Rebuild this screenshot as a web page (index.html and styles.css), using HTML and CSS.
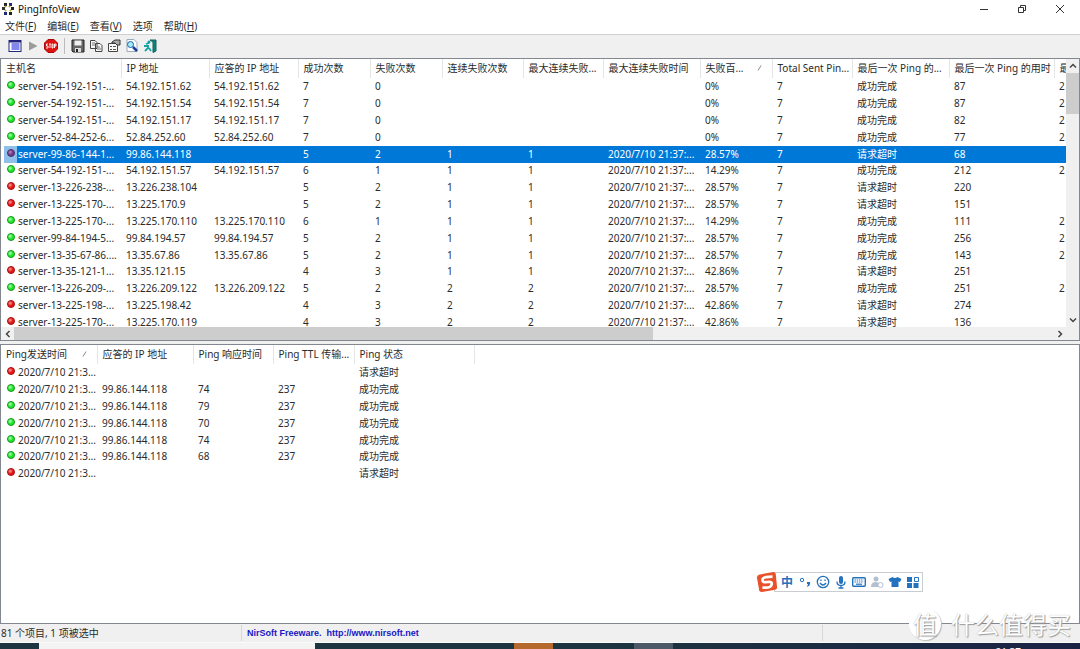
FILE: index.html
```html
<!DOCTYPE html>
<html lang="zh-CN">
<head>
<meta charset="utf-8">
<title>PingInfoView</title>
<link rel="stylesheet" href="styles.css">
</head>
<body>
<header class="titlebar">
  <svg class="app-icon" viewBox="0 0 12 12" aria-hidden="true"><rect x="2" y="0" width="3" height="3" fill="#222"/><rect x="7" y="0" width="3" height="3" fill="#1d2c7a"/><rect x="0" y="4" width="3" height="3" fill="#333"/><rect x="9" y="4" width="3" height="3" fill="#222"/><rect x="2" y="9" width="3" height="3" fill="#1d2c7a"/><rect x="7" y="9" width="3" height="3" fill="#222"/><path d="M3 3l1 1M8 3l-1 1M3 8l1-1M9 8L8 7" stroke="#b6a31c" stroke-width="2"/></svg>
  <h1>PingInfoView</h1>
  <div class="window-buttons">
    <button aria-label="最小化"><svg viewBox="0 0 10 10"><path d="M1 5.500h8" /></svg></button>
    <button aria-label="还原"><svg viewBox="0 0 10 10"><path d="M1.500 3.500h5v5h-5zM3.500 3.500v-2h5v5h-2"/></svg></button>
    <button aria-label="关闭"><svg viewBox="0 0 10 10"><path d="M1 1l8 8M9 1L1 9"/></svg></button>
  </div>
</header>
<nav class="menubar">
  <button>文件(<u>F</u>)</button><button>编辑(<u>E</u>)</button><button>查看(<u>V</u>)</button><button>选项</button><button>帮助(<u>H</u>)</button>
</nav>
<div class="toolbar">
  <button aria-label="显示下方窗格"><svg viewBox="0 0 14 14"><rect x="1" y="1.500" width="12" height="11" fill="#fff" stroke="#24247c"/><path d="M1 2.500h12" stroke="#24247c" stroke-width="2"/><rect x="3.500" y="4" width="8" height="7" fill="#8287ee"/></svg></button>
  <button aria-label="开始"><svg viewBox="0 0 14 14"><path d="M3 2.500v9l8.500-4.500z" fill="#9b9b9b"/></svg></button>
  <button aria-label="停止"><svg viewBox="0 0 14 14"><path d="M4 .5h6L13.500 4v6L10 13.500H4L.5 10V4z" fill="#df1212" stroke="#ad0909"/><path d="M4 5H2.500v2h1.500v2H2M5 5h2M6 5v4M8 5h1v4H8zM10.500 9V5H12v2h-1.500" fill="none" stroke="#fff" stroke-width=".9"/></svg></button>
  <span class="divider"></span>
  <button aria-label="保存"><svg viewBox="0 0 14 14"><path d="M1 1h12v12H2l-1-1z" fill="#666" stroke="#222"/><path d="M3.500 1.500h7v5h-7z" fill="#eee"/><path d="M4 9h6v4H4z" fill="#ddd"/><path d="M5 10h2v3H5z" fill="#222"/></svg></button>
  <button aria-label="复制"><svg viewBox="0 0 14 14"><g fill="#f5f5f5" stroke="#444"><path d="M1.500 1.500H6L8 3.500v6H1.500zM6.500 4.500H11l2 2v6H6.500z"/><path d="M3 4h3M3 6h3M8 8h3M8 10h4" stroke="#777"/></g></svg></button>
  <button aria-label="属性"><svg viewBox="0 0 14 14"><path d="M1.500 4.500h9v8h-9z" fill="#f8f8f8" stroke="#444"/><path d="M3 7.500h2M6 7.500h3M3 10.500h2M6 10.500h3" stroke="#555"/><path d="M5 3l3-2h5v5h-3L8 4H5z" fill="#aaa" stroke="#333"/></svg></button>
  <button aria-label="查找"><svg viewBox="0 0 14 14"><path d="M2 .5h7l3 3v9H2z" fill="#fff" stroke="#9ab"/><circle cx="5.500" cy="5.500" r="3" fill="#a7ebf5" stroke="#1764b0"/><path d="M8 8l4 4" stroke="#1b3f9c" stroke-width="2.500"/></svg></button>
  <button aria-label="退出"><svg viewBox="0 0 14 14"><path d="M7 1h6v11l-3 1.500V3L7 1z" fill="#12827f" stroke="#15615f"/><path d="M1 7h5M6 4L3 5M5 6v3l-3 3M6 9l2 3" stroke="#13a5a5" stroke-width="1.800" fill="none"/><circle cx="6" cy="3" r="1.500" fill="#139c9c"/></svg></button>
</div>
<main class="panes">
  <section class="pane hosts" aria-label="主机列表">
    <div class="list">
      <table>
        <colgroup><col class="w120"><col class="w88"><col class="w89"><col class="w72"><col class="w72"><col class="w81"><col class="w80"><col class="w97"><col class="w72"><col class="w80"><col class="w97"><col class="w105"><col></colgroup>
        <thead><tr><th>主机名</th><th>IP 地址</th><th>应答的 IP 地址</th><th>成功次数</th><th>失败次数</th><th>连续失败次数</th><th>最大连续失败...</th><th>最大连续失败时间</th><th><span class="sorted">失败百...<svg viewBox="0 0 5 6" aria-hidden="true"><path d="M1 5.500L4 .5"/></svg></span></th><th>Total Sent Pin...</th><th>最后一次 Ping 的...</th><th>最后一次 Ping 的用时</th><th>最</th></tr></thead>
        <tbody>
          <tr><td><i class="dot up"></i>server-54-192-151-...<td>54.192.151.62<td>54.192.151.62<td>7<td>0<td><td><td><td>0%<td>7<td>成功完成<td>87<td>2</tr>
          <tr><td><i class="dot up"></i>server-54-192-151-...<td>54.192.151.54<td>54.192.151.54<td>7<td>0<td><td><td><td>0%<td>7<td>成功完成<td>87<td>2</tr>
          <tr><td><i class="dot up"></i>server-54-192-151-...<td>54.192.151.17<td>54.192.151.17<td>7<td>0<td><td><td><td>0%<td>7<td>成功完成<td>82<td>2</tr>
          <tr><td><i class="dot up"></i>server-52-84-252-6...<td>52.84.252.60<td>52.84.252.60<td>7<td>0<td><td><td><td>0%<td>7<td>成功完成<td>77<td>2</tr>
          <tr class="selected"><td><i class="dot"></i>server-99-86-144-1...<td>99.86.144.118<td><td>5<td>2<td>1<td>1<td>2020/7/10 21:37:...<td>28.57%<td>7<td>请求超时<td>68<td></tr>
          <tr><td><i class="dot up"></i>server-54-192-151-...<td>54.192.151.57<td>54.192.151.57<td>6<td>1<td>1<td>1<td>2020/7/10 21:37:...<td>14.29%<td>7<td>成功完成<td>212<td>2</tr>
          <tr><td><i class="dot"></i>server-13-226-238-...<td>13.226.238.104<td><td>5<td>2<td>1<td>1<td>2020/7/10 21:37:...<td>28.57%<td>7<td>请求超时<td>220<td></tr>
          <tr><td><i class="dot"></i>server-13-225-170-...<td>13.225.170.9<td><td>5<td>2<td>1<td>1<td>2020/7/10 21:37:...<td>28.57%<td>7<td>请求超时<td>151<td></tr>
          <tr><td><i class="dot up"></i>server-13-225-170-...<td>13.225.170.110<td>13.225.170.110<td>6<td>1<td>1<td>1<td>2020/7/10 21:37:...<td>14.29%<td>7<td>成功完成<td>111<td>2</tr>
          <tr><td><i class="dot up"></i>server-99-84-194-5...<td>99.84.194.57<td>99.84.194.57<td>5<td>2<td>1<td>1<td>2020/7/10 21:37:...<td>28.57%<td>7<td>成功完成<td>256<td>2</tr>
          <tr><td><i class="dot up"></i>server-13-35-67-86....<td>13.35.67.86<td>13.35.67.86<td>5<td>2<td>1<td>1<td>2020/7/10 21:37:...<td>28.57%<td>7<td>成功完成<td>143<td>2</tr>
          <tr><td><i class="dot"></i>server-13-35-121-1...<td>13.35.121.15<td><td>4<td>3<td>1<td>1<td>2020/7/10 21:37:...<td>42.86%<td>7<td>请求超时<td>251<td></tr>
          <tr><td><i class="dot up"></i>server-13-226-209-...<td>13.226.209.122<td>13.226.209.122<td>5<td>2<td>2<td>2<td>2020/7/10 21:37:...<td>28.57%<td>7<td>成功完成<td>251<td>2</tr>
          <tr><td><i class="dot"></i>server-13-225-198-...<td>13.225.198.42<td><td>4<td>3<td>2<td>2<td>2020/7/10 21:37:...<td>42.86%<td>7<td>请求超时<td>274<td></tr>
          <tr><td><i class="dot"></i>server-13-225-170-...<td>13.225.170.119<td><td>4<td>3<td>2<td>2<td>2020/7/10 21:37:...<td>42.86%<td>7<td>请求超时<td>136<td></tr>
        </tbody>
      </table>
    </div>
    <div class="vscroll">
      <button aria-label="向上滚动"><svg viewBox="0 0 8 8"><path d="M1 5.500l3-3 3 3"/></svg></button>
      <div class="track"><div class="thumb"></div></div>
      <button aria-label="向下滚动"><svg viewBox="0 0 8 8"><path d="M1 2.500l3 3 3-3"/></svg></button>
    </div>
    <div class="hscroll">
      <button aria-label="向左滚动"><svg viewBox="0 0 8 8"><path d="M5.500 1l-3 3 3 3"/></svg></button>
      <div class="track"><div class="thumb"></div></div>
      <button aria-label="向右滚动"><svg viewBox="0 0 8 8"><path d="M2.500 1l3 3-3 3"/></svg></button>
    </div>
    <div class="corner"></div>
  </section>
  <section class="pane pings" aria-label="Ping 记录">
    <table>
      <colgroup><col class="w96"><col class="w96"><col class="w80"><col class="w81"><col class="w120"><col></colgroup>
      <thead><tr><th><span class="sorted">Ping发送时间<svg viewBox="0 0 5 6" aria-hidden="true"><path d="M1 5.500L4 .5"/></svg></span></th><th>应答的 IP 地址</th><th>Ping 响应时间</th><th>Ping TTL 传输...</th><th>Ping 状态</th><th></th></tr></thead>
      <tbody>
        <tr><td><i class="dot"></i>2020/7/10 21:3...<td><td><td><td>请求超时<td></tr>
        <tr><td><i class="dot up"></i>2020/7/10 21:3...<td>99.86.144.118<td>74<td>237<td>成功完成<td></tr>
        <tr><td><i class="dot up"></i>2020/7/10 21:3...<td>99.86.144.118<td>79<td>237<td>成功完成<td></tr>
        <tr><td><i class="dot up"></i>2020/7/10 21:3...<td>99.86.144.118<td>70<td>237<td>成功完成<td></tr>
        <tr><td><i class="dot up"></i>2020/7/10 21:3...<td>99.86.144.118<td>74<td>237<td>成功完成<td></tr>
        <tr><td><i class="dot up"></i>2020/7/10 21:3...<td>99.86.144.118<td>68<td>237<td>成功完成<td></tr>
        <tr><td><i class="dot"></i>2020/7/10 21:3...<td><td><td><td>请求超时<td></tr>
      </tbody>
    </table>
  </section>
</main>
<footer class="statusbar">
  <span class="count">81 个项目, 1 项被选中</span>
  <a href="http://www.nirsoft.net">NirSoft Freeware.&nbsp; http://www.nirsoft.net</a>
  <span></span>
</footer>
<div class="taskbar">
  <span class="search"></span><span class="app orange"></span><span class="app gray"></span><time>21:37</time>
</div>

<div class="ime">
  <svg class="sogou" viewBox="0 0 24 24" aria-hidden="true"><path d="M3 4l16-3q2 0 2.500 2L23 18q0 2-2 2.500L6 23q-2 0-2.500-2L1 7q0-2 2-3z" fill="#e8512a"/><path d="M18 6Q7 6 7 9.500T12.500 12 17 15 7 18" fill="none" stroke="#fff" stroke-width="3"/></svg>
  <div class="ime-bar">
    <button>中</button>
    <button aria-label="标点"><svg viewBox="0 0 14 14"><circle cx="4" cy="5" r="1.700" fill="none" stroke="#2472bd"/><path d="M9 7h3v2q0 2-3 3l1-3H9z" fill="#2472bd"/></svg></button>
    <button aria-label="表情"><svg viewBox="0 0 14 14" fill="none" stroke="#2472bd" stroke-width="1.300"><circle cx="7" cy="7" r="5.700"/><path d="M4 8q3 4 6 0M5 4.500v1.500M9 4.500v1.500"/></svg></button>
    <button aria-label="语音"><svg viewBox="0 0 14 14"><rect x="5" y="1" width="4" height="8" rx="2" fill="#2472bd"/><path d="M3 6.500q0 4 4 4t4-4M7 10v3M4.500 13h5" fill="none" stroke="#2472bd" stroke-width="1.300"/></svg></button>
    <button aria-label="键盘"><svg viewBox="0 0 14 14"><rect x=".7" y="2.700" width="12.600" height="8.600" rx="1" fill="#fff" stroke="#2472bd" stroke-width="1.400"/><path d="M2.500 5h9M2.500 7h9" stroke="#2472bd" stroke-width="1.200" stroke-dasharray="1.400 .8"/><path d="M4 9.200h6" stroke="#2472bd" stroke-width="1.200"/></svg></button>
    <button aria-label="用户"><svg viewBox="0 0 14 14"><circle cx="6" cy="4" r="2.500" fill="#b4c0d2"/><path d="M1 12q0-5 5-5 3 0 3 2v3z" fill="#b4c0d2"/><circle cx="10.500" cy="10" r="2.500" fill="#fff" stroke="#b4c0d2"/></svg></button>
    <button aria-label="皮肤"><svg viewBox="0 0 14 14"><path d="M4.500 2q2.500 2 5 0L13.500 4 12 7l-1.500-.5V12h-7V6.500L2 7 .5 4z" fill="#2472bd"/></svg></button>
    <button aria-label="工具箱"><svg viewBox="0 0 14 14"><path d="M1 2h5v5H1zM1 8h5v5H1zM7.500 8h5v5h-5z" fill="#2472bd"/><path d="M8.500 2.500h4v4h-4z" fill="none" stroke="#2472bd"/></svg></button>
  </div>
</div>
<div class="watermark"><span class="seal">值</span><span>什么值得买</span></div>
</body>
</html>
```
FILE: styles.css
```css
*, *::before { box-sizing: border-box; }
body {
  margin: 0;
  height: 100vh;
  display: flex;
  flex-direction: column;
  overflow: hidden;
  position: relative;
  background: #f0f0f0;
  color: #2b2b2b;
  font: 10px/16px "Noto Sans", "Noto Sans CJK SC", sans-serif;
}
button {
  margin: 0;
  padding: 0;
  border: 0;
  background: none;
  color: inherit;
  font: inherit;
}
svg { display: block; }

.titlebar { display: flex; align-items: center; height: 18px; padding-left: 2px; background: #fff; }
.app-icon { width: 12px; height: 12px; }
.titlebar h1 { flex: 1; margin: 0 0 0 4px; font-size: 10px; font-weight: 400; color: #111; }
.window-buttons { display: flex; gap: 28px; padding-right: 15px; }
.window-buttons svg { width: 10px; height: 10px; fill: none; stroke: #333; }
.menubar { display: flex; gap: 11px; height: 16px; padding-left: 5px; background: #fff; }

.toolbar {
  display: flex;
  align-items: center;
  gap: 4px;
  height: 24px;
  padding: 0 8px 2px;
  border-top: 1px solid #d0d0d0;
}
.toolbar svg { width: 14px; height: 14px; }
.toolbar .divider { width: 1px; height: 16px; margin: 0 2px; background: #bbb; }

.panes { flex: 1; min-height: 0; display: grid; grid-template-rows: 283fr 280fr; gap: 3px; }
.pane { min-height: 0; overflow: hidden; border: 1px solid #828790; background: #fff; }
.hosts { display: grid; grid-template: minmax(0, 1fr) 13px / minmax(0, 1fr) 13px; }
.list { overflow: hidden; }

table { width: 100%; table-layout: fixed; border-collapse: collapse; }
th, td { padding: 0 0 0 5px; overflow: hidden; white-space: nowrap; text-align: left; font-weight: 400; }
th { height: 19px; padding-bottom: 2px; border-right: 1px solid #e5e5e5; }
th:last-child { border-right: 0; }
td { padding-bottom: 2px; line-height: 14px; }
tbody tr { height: 17px; }
tbody tr:nth-child(6n) { height: 16px; }
td:first-child { padding-left: 3px; }
.w72 { width: 72px; }
.w80 { width: 80px; }
.w81 { width: 81px; }
.w88 { width: 88px; }
.w89 { width: 89px; }
.w96 { width: 96px; }
.w97 { width: 97px; }
.w105 { width: 105px; }
.w120 { width: 120px; }
.sorted { display: flex; align-items: center; justify-content: space-between; padding-right: 10px; }
.sorted svg { width: 5px; height: 6px; fill: none; stroke: #888; }

.dot {
  display: inline-flex;
  align-items: center;
  justify-content: center;
  width: 13px;
  height: 12px;
  margin-right: 1px;
  vertical-align: top;
}
.dot::before {
  content: "";
  width: 8px;
  height: 8px;
  border: 1px solid #a80f0f;
  border-radius: 50%;
  background: radial-gradient(circle at 35% 35%, #ff9c9c, #e01818 50%);
}
.dot.up::before { border-color: #16971c; background: radial-gradient(circle at 35% 35%, #b8ffb8, #1de62a 50%); }
.selected td { background: #0078d7; color: #fff; }
.selected td:first-child { background: linear-gradient(90deg, #fff 3px, #8fc0ea 3px, #8fc0ea 16px, #0078d7 16px); }
.selected .dot::before { border-color: #4a3075; background: radial-gradient(circle at 35% 35%, #b58fc0, #703a83 50%); }

.vscroll, .hscroll, .corner { background: #f0f0f0; }
.vscroll, .hscroll { display: flex; }
.vscroll { flex-direction: column; }
.hscroll { height: 13px; }
.vscroll button, .hscroll button { display: grid; place-items: center; width: 13px; height: 14px; }
.vscroll svg, .hscroll svg { width: 8px; height: 8px; fill: none; stroke: #444; stroke-width: 1.5; }
.track { flex: 1; }
.thumb { background: #cdcdcd; }
.vscroll .thumb { height: 17%; }
.hscroll .thumb { width: 61.5%; height: 100%; }

.statusbar {
  display: grid;
  grid-template-columns: 242px 1fr 257px;
  height: 19px;
  align-items: center;
  border-bottom: 1px solid #fafafa;
}
.statusbar > * { height: 16px; padding-left: 1px; border-right: 1px solid #d7d7d7; }
.statusbar > :last-child { border-right: 0; }
.statusbar a { padding-left: 5px; color: #1717c4; font: bold 9px/16px "Liberation Sans", sans-serif; text-decoration: none; }

.taskbar { display: flex; height: 6px; overflow: hidden; padding-left: 39px; background: linear-gradient(90deg, #1d3540 55%, #1b2345); }
.taskbar .search { width: 276px; margin-right: 199px; background: #f3f3f3; }
.app { width: 39px; margin-right: 81px; }
.orange { background: #b5692c; }
.gray { background: #4c5966; }
.taskbar time { margin-left: auto; padding: 1px 59px 0 0; color: #fff; }

.ime { position: absolute; right: 157px; bottom: 56px; display: flex; align-items: center; }
.sogou { width: 22px; height: 22px; margin-right: -4px; z-index: 1; }
.ime-bar { display: flex; align-items: center; gap: 4px; height: 20px; padding: 0 2px 0 5px; border: 1px solid #c9cdd2; background: #fff; color: #2472bd; }
.ime-bar button { width: 14px; height: 14px; font: bold 12px/14px "Noto Sans CJK SC", sans-serif; }

.watermark {
  position: absolute;
  right: 9px;
  bottom: 9px;
  display: flex;
  align-items: center;
  gap: 10px;
  color: #fff;
  font: 24px/32px "Noto Sans CJK SC", sans-serif;
  text-shadow: 1px 1px 1px #999, 0 0 1px #aaa;
}
.seal { width: 32px; height: 32px; border-radius: 50%; background: #fff; box-shadow: 1px 1px 1px #bbb; text-align: center; }
```
